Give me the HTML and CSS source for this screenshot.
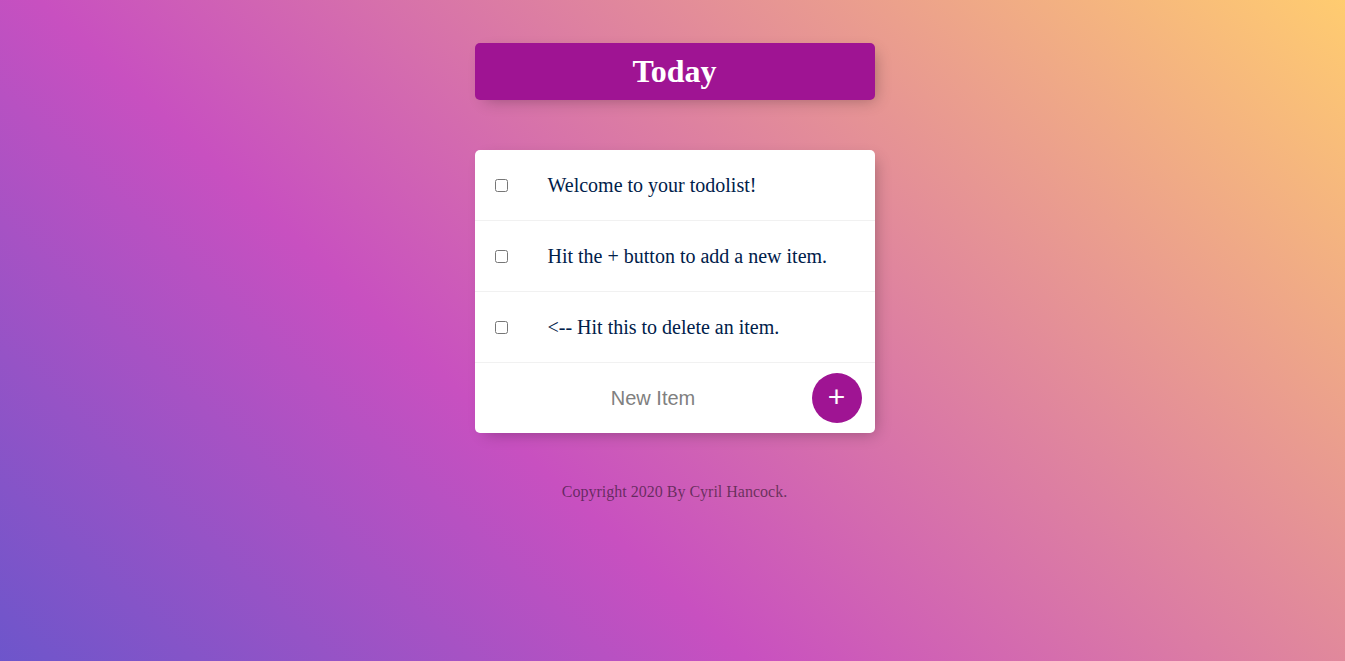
FILE: index.html
```
<!DOCTYPE html>
<html lang="en">
<head>
<meta charset="utf-8">
<title>To-Do List</title>
<link rel="stylesheet" href="styles.css">
</head>
<body>
  <div class="box heading">
    <h1 class="title">Today</h1>
  </div>
  <div class="box">
    <div class="item">
      <input class="check" type="checkbox">
      <p class="text">Welcome to your todolist!</p>
    </div>
    <div class="item">
      <input class="check" type="checkbox">
      <p class="text">Hit the + button to add a new item.</p>
    </div>
    <div class="item">
      <input class="check" type="checkbox">
      <p class="text">&lt;-- Hit this to delete an item.</p>
    </div>
    <form class="item add-form" action="#" onsubmit="return false">
      <input class="new-item" type="text" placeholder="New Item" autocomplete="off">
      <button class="add-btn" type="submit">+</button>
    </form>
  </div>
  <footer class="footer">Copyright 2020 By Cyril Hancock.</footer>
</body>
</html>
```
FILE: styles.css
```
html {
  min-height: 100%;
  background-color: #C850C0;
  background-image: linear-gradient(43deg, #4158D0 0%, #C850C0 46%, #FFCC70 100%);
  background-size: 100% 1000px;
  background-repeat: no-repeat;
}

body {
  margin: 0;
  padding: 43px 0 0 4px;
  font-family: "Liberation Serif", "Times New Roman", serif;
}

.box {
  max-width: 400px;
  margin: 0 auto 50px;
  background: #fff;
  border-radius: 5px;
  box-shadow: 5px 5px 15px -5px rgba(0, 0, 0, 0.3);
}

.heading {
  background-color: #9f1493;
  text-align: center;
}

.title {
  margin: 0;
  padding: 10px;
  color: #fff;
  font-size: 32px;
  font-weight: bold;
  line-height: 37px;
}

.item {
  min-height: 70px;
  display: flex;
  align-items: center;
  border-bottom: 1px solid #F1F1F1;
}

.item:last-child {
  border-bottom: 0;
}

.check {
  margin: 20px;
  width: 13px;
  height: 13px;
}

.text {
  margin: 0;
  padding: 20px;
  font-size: 20px;
  color: #00204a;
}

.add-form {
  margin: 0 0 0 20px;
}

.new-item {
  text-align: center;
  height: 60px;
  border: none;
  padding: 1px 2px;
  font-size: 20px;
  font-family: "Liberation Sans", Arial, sans-serif;
  width: 313px;
  background: transparent;
}

.new-item::placeholder {
  color: grey;
  opacity: 1;
}

.new-item:focus {
  outline: none;
}

.add-btn {
  min-height: 50px;
  width: 50px;
  border-radius: 50%;
  border: 0;
  background-color: #9f1493;
  color: #fff;
  font-size: 30px;
  font-family: "Liberation Sans", Arial, sans-serif;
  padding: 0 0 3px;
  line-height: 1;
}

.footer {
  color: rgba(0, 0, 0, 0.5);
  text-align: center;
  font-size: 16px;
  line-height: 18px;
}
```
